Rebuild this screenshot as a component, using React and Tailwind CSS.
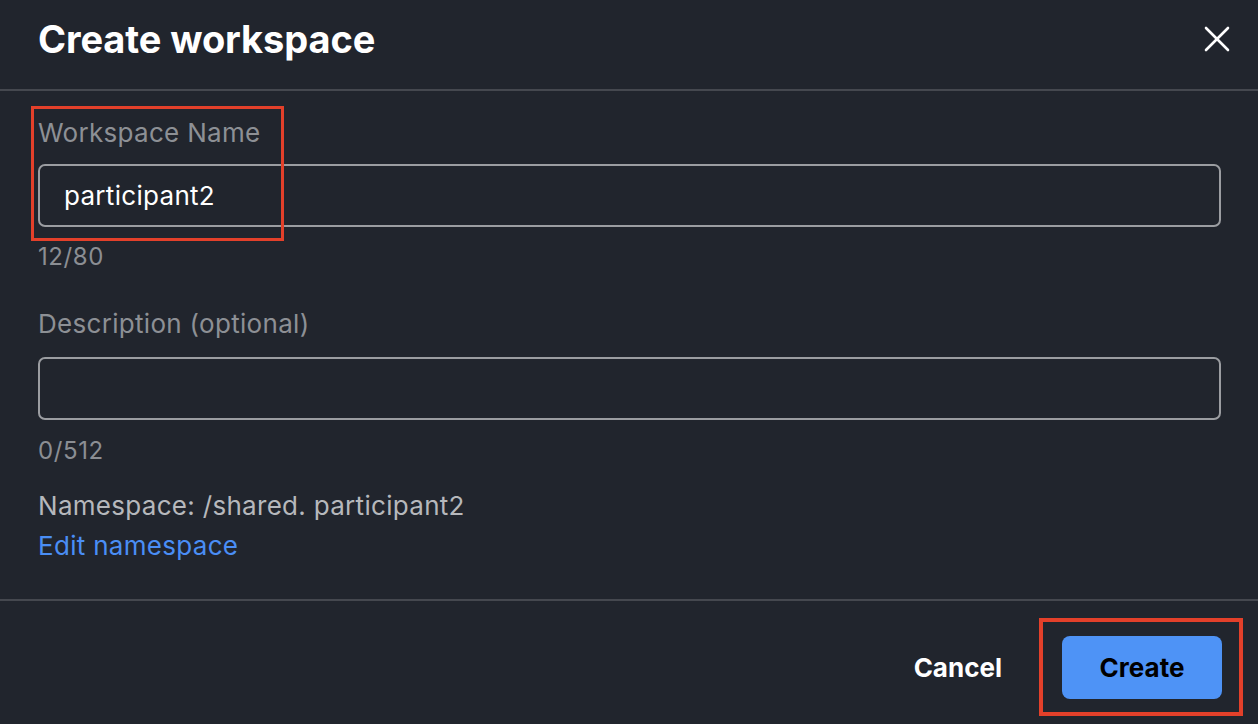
import React, { useState } from 'react';

const CloseIcon = () => (
    <svg width="28" height="28" viewBox="0 0 28 28" fill="none" stroke="#ffffff" strokeWidth="2.6" strokeLinecap="round">
        <line x1="3" y1="3" x2="25" y2="25" />
        <line x1="25" y1="3" x2="3" y2="25" />
    </svg>
);

const App = () => {
    const [name, setName] = useState('participant2');
    const [description, setDescription] = useState('');

    return (
        <div className="relative h-[724px] w-full overflow-hidden bg-[#21252d] text-white" style={{ fontFamily: 'Inter, "Liberation Sans", sans-serif' }}>
            {/* header */}
            <div className="flex h-[91px] items-start justify-between border-b-2 border-[#45484f] pl-[38px] pr-[27px]">
                <h1 className="mt-[15px] text-[38px] leading-[48px] font-bold tracking-[-0.1px]">Create workspace</h1>
                <button className="mt-[25px] text-white">
                    <CloseIcon />
                </button>
            </div>

            {/* body */}
            <div className="flex flex-col pl-[38px] pr-[37px] pb-[37px] border-b-2 border-[#45484f] tracking-[0.3px]">
                <label className="mt-[26px] text-[26px] leading-[32px] text-[#8d9095]">Workspace Name</label>
                <input
                    className="mt-[15px] h-[63px] w-full rounded-[7px] border-2 border-[#9b9da1] bg-transparent px-[24px] text-[26px] tracking-[0.3px] text-white outline-none"
                    value={name}
                    onChange={(e) => setName(e.target.value)}
                />
                <span className="mt-[16px] text-[24px] leading-[28px] tracking-[0.6px] text-[#8b8e93]">{name.length}/80</span>

                <label className="mt-[37px] text-[26px] leading-[32px] text-[#8d9095]">Description (optional)</label>
                <input
                    className="mt-[17px] h-[63px] w-full rounded-[7px] border-2 border-[#9b9da1] bg-transparent px-[24px] text-[26px] text-white outline-none"
                    value={description}
                    onChange={(e) => setDescription(e.target.value)}
                />
                <span className="mt-[17px] text-[24px] leading-[28px] tracking-[0.6px] text-[#8b8e93]">{description.length}/512</span>

                <p className="mt-[25px] text-[26px] leading-[32px] text-[#b6b8bc]">Namespace: /shared. participant2</p>
                <a className="mt-[8px] text-[26px] leading-[32px] text-[#4a8ef5]" href="#">Edit namespace</a>
            </div>

            {/* footer */}
            <div className="flex items-center justify-end gap-[60px] pt-[35px] pr-[36px]">
                <button className="text-[26px] font-bold text-white">Cancel</button>
                <button className="h-[63px] w-[160px] rounded-[8px] bg-[#4e93f6] text-[26px] font-bold text-black">Create</button>
            </div>

            {/* annotation boxes */}
            <div className="pointer-events-none absolute left-[31px] top-[106px] h-[135px] w-[253px] border-[3px] border-[#e3402a]" />
            <div className="pointer-events-none absolute left-[1039px] top-[618px] h-[98px] w-[204px] border-[4px] border-[#e3402a]" />
        </div>
    );
};

export default App;
